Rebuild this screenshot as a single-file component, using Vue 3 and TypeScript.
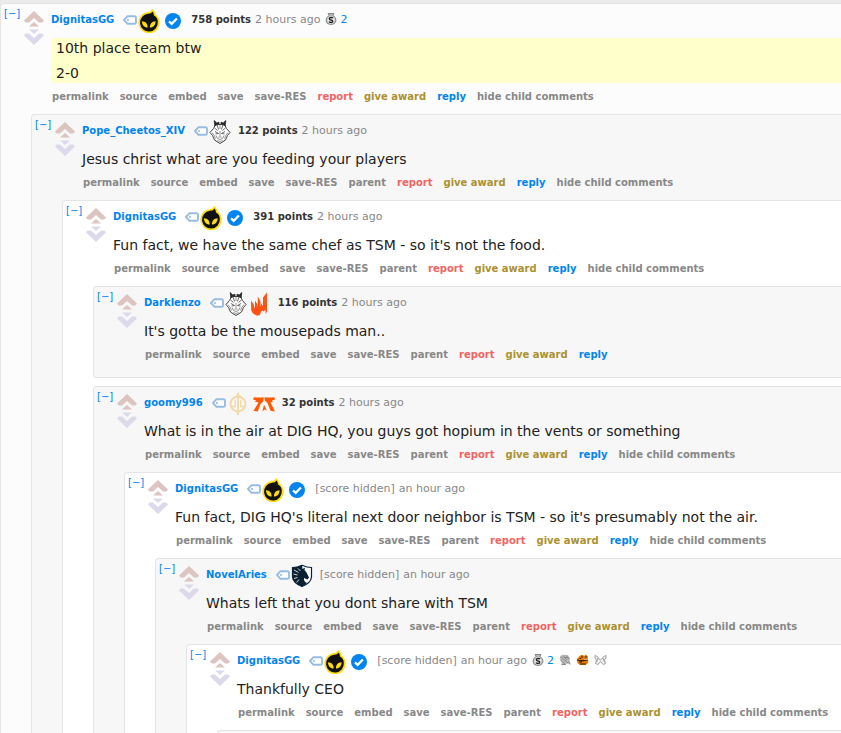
<script setup lang="ts">
import { computed } from 'vue'

defineOptions({ name: 'App' })

type Flair = 'dig' | 'verified' | 'g2' | 'flame' | 'guard' | 'fnatic' | 'liquid'
type Award = 'silver' | 'gem' | 'frog' | 'bow'

interface Comment {
  id: string
  author: string
  flairs: Flair[]
  points?: number
  age: string
  awards?: { kind: Award; count?: number }[]
  body: string[]
  highlighted?: boolean
  empty?: boolean
  replies: Comment[]
}

const props = defineProps<{ comment?: Comment; depth?: number }>()

const thread: Comment = {
  id: 'c1',
  author: 'DignitasGG',
  flairs: ['dig', 'verified'],
  points: 758,
  age: '2 hours ago',
  awards: [{ kind: 'silver', count: 2 }],
  body: ['10th place team btw', '2-0'],
  highlighted: true,
  replies: [
    {
      id: 'c2',
      author: 'Pope_Cheetos_XIV',
      flairs: ['g2'],
      points: 122,
      age: '2 hours ago',
      body: ['Jesus christ what are you feeding your players'],
      replies: [
        {
          id: 'c3',
          author: 'DignitasGG',
          flairs: ['dig', 'verified'],
          points: 391,
          age: '2 hours ago',
          body: ["Fun fact, we have the same chef as TSM - so it's not the food."],
          replies: [
            {
              id: 'c4',
              author: 'Darklenzo',
              flairs: ['g2', 'flame'],
              points: 116,
              age: '2 hours ago',
              body: ["It's gotta be the mousepads man.."],
              replies: [],
            },
            {
              id: 'c5',
              author: 'goomy996',
              flairs: ['guard', 'fnatic'],
              points: 32,
              age: '2 hours ago',
              body: ['What is in the air at DIG HQ, you guys got hopium in the vents or something'],
              replies: [
                {
                  id: 'c6',
                  author: 'DignitasGG',
                  flairs: ['dig', 'verified'],
                  age: 'an hour ago',
                  body: ["Fun fact, DIG HQ's literal next door neighbor is TSM - so it's presumably not the air."],
                  replies: [
                    {
                      id: 'c7',
                      author: 'NovelAries',
                      flairs: ['liquid'],
                      age: 'an hour ago',
                      body: ['Whats left that you dont share with TSM'],
                      replies: [
                        {
                          id: 'c8',
                          author: 'DignitasGG',
                          flairs: ['dig', 'verified'],
                          age: 'an hour ago',
                          awards: [{ kind: 'silver', count: 2 }, { kind: 'gem' }, { kind: 'frog' }, { kind: 'bow' }],
                          body: ['Thankfully CEO'],
                          replies: [
                            { id: 'c9', author: '', flairs: [], age: '', body: [], empty: true, replies: [] },
                          ],
                        },
                      ],
                    },
                  ],
                },
              ],
            },
          ],
        },
      ],
    },
  ],
}

const level = computed(() => props.depth ?? 0)
const node = computed<Comment>(() => props.comment ?? thread)

const actions = computed(() => {
  const list = ['permalink', 'source', 'embed', 'save', 'save-RES']
  if (level.value > 0) list.push('parent')
  list.push('report', 'give award', 'reply')
  if (node.value.replies.length) list.push('hide child comments')
  return list
})

const actionClass = (name: string) => ({
  report: name === 'report',
  award: name === 'give award',
  reply: name === 'reply',
})
</script>

<template>
  <div :class="level === 0 ? 'page' : 'nested'">
    <article class="card" :class="[level === 0 ? 'root' : level % 2 ? 'odd' : 'even', { empty: node.empty }]">
      <div v-if="!node.empty" class="entry">
        <div class="gutter">
          <a class="collapse" :href="'#' + node.id">[−]</a>
          <div class="votes">
            <button type="button" aria-label="upvote">
              <svg width="20" height="16" viewBox="0 0 20 16">
                <path d="M0 9.500 10 0 20 9.500 18.500 11.500H15L10 7 5 11.500H1.500zM5 15.500 10 11 15 15.500z" fill="#dcc4c0" />
              </svg>
            </button>
            <button type="button" aria-label="downvote">
              <svg width="20" height="16" viewBox="0 0 20 16">
                <path d="M0 6.500 10 16 20 6.500 18.500 4.500H15L10 9 5 4.500H1.500zM5 .5 10 5 15 .5z" fill="#dcdaea" />
              </svg>
            </button>
          </div>
        </div>

        <div class="content">
          <header class="tagline">
            <a class="author" :href="'#user-' + node.id">{{ node.author }}</a>
            <button type="button" class="tag" aria-label="tag user">
              <svg width="14" height="10" viewBox="0 0 14 10">
                <path d="M1 5 4.500 1.200H11.500Q13 1.200 13 2.500V7.500Q13 8.800 11.500 8.800H4.500z" fill="#fff" stroke="#98bde2" stroke-width="1.900" stroke-linejoin="round" />
                <circle cx="5" cy="5" r="1.100" fill="#98bde2" />
              </svg>
            </button>
            <template v-for="flair in node.flairs" :key="flair">
              <svg v-if="flair === 'dig'" class="flair" viewBox="0 0 24 24">
                <path d="M11 3C13.500 2.900 14 1.700 15 0 17.200 1.300 18.200 3.300 18.500 5.300 21 7.300 22.700 10 22.700 13A10.700 10.700 0 1 1 11 3z" fill="#ffdc10" />
                <path d="M11 4.800C13.500 4.700 14.500 4 15.400 2.500 16.700 4 16.800 5.200 17 6.500 19.800 8 20.800 10.300 20.800 13A8.900 8.900 0 1 1 11 4.800z" fill="#111" />
                <path d="M5 12.200C8.500 12.200 11 15 10.600 18.600 7 18.200 5 15.800 5 12.200zM18.600 12.200C15 12.200 12.700 15 13 18.600 16.500 18.200 18.600 15.800 18.600 12.200z" fill="#ffdc10" />
              </svg>
              <svg v-else-if="flair === 'verified'" class="flair" viewBox="0 0 24 24">
                <circle cx="12" cy="12" r="8" fill="#0084f0" />
                <path d="m8 12.300 2.700 2.600 5.200-5.400" fill="none" stroke="#fff" stroke-width="2.300" />
              </svg>
              <svg v-else-if="flair === 'g2'" class="flair" viewBox="0 0 24 24">
                <path d="M7 5.500 9 4.500H15L17 5.500 18.500 8.500 22 12.500 19.500 15.500 17.500 20 12 23.500 6.500 20 4.500 15.500 2 12.500 5.500 8.500z" fill="#fff" stroke="#444" stroke-width="1" stroke-linejoin="round" />
                <path d="M6.800 6 6.200 .5 8.800 3 11 2.200V4.200L9 4.500zM17.200 6 17.800 .5 15.200 3 13 2.200V4.200L15 4.500z" fill="#2b2b2b" stroke="#2b2b2b" stroke-width=".8" stroke-linejoin="round" />
                <path d="M9 4.500 10.500 9.500M15 4.500 13.500 9.500M6.500 8 9.500 10.500M17.500 8 14.500 10.500M7 11.500 10.500 13.500 7.500 14M17 11.500 13.500 13.500 16.500 14" fill="none" stroke="#444" stroke-width=".8" />
                <path d="M12 11V16M10.300 17H13.700M8 15.500 9.500 18.500 12 19.500 14.500 18.500 16 15.500M9.500 20.500 12 21.500 14.500 20.500M4 12.500 6.500 16 7.500 18.500M20 12.500 17.500 16 16.500 18.500M12 5V9" fill="none" stroke="#777" stroke-width=".8" />
              </svg>
              <svg v-else-if="flair === 'flame'" class="flair" viewBox="0 0 24 24">
                <path d="M3 8.500 5.800 12.500 6.200 16 7 14.500V8.500L9.200 12 9.800 14.500V4.500L12.500 9.500V15L13.200 11.500 15 14V5.500L19 .5V19.500L17.500 22V17.500L15.800 19.500 14 18.500 12.500 21 12 23 9 23.800 5 21.500 3.200 18.500z" fill="#ff5315" />
              </svg>
              <svg v-else-if="flair === 'guard'" class="flair" viewBox="0 0 24 24">
                <g fill="none" stroke="#f1d9a9" stroke-width="2">
                  <circle cx="12" cy="12" r="7.500" />
                  <path d="M12 1V23" />
                  <path d="M9.300 7.500V14.500H5.500M14.700 7.500V14.500H18.500" stroke-width="1.400" />
                </g>
                <path d="M12 0 14.500 5H9.500zM10 19.500H14L12 24z" fill="#f1d9a9" />
              </svg>
              <svg v-else-if="flair === 'fnatic'" class="flair wide" viewBox="0 0 24 24">
                <path d="M2 5.200Q7 5.800 11.700 5.200L11.300 9.500 8.500 12 5.800 19.500 1.500 18.800 6.500 10.500 2.500 9.500 4.500 8.500 1 7.500zM22.500 5.200Q17 5.800 12.500 5.200L12.800 8.500 15.500 11 18.500 18.800 23 19.500 18.500 10.500 21 9.500 19.800 8.500 23 7.500zM12 12.800 14.800 18.500 12.500 17.500 10.300 19.500z" fill="#ff5a00" />
              </svg>
              <svg v-else class="flair" viewBox="0 0 24 24">
                <path d="M12 1.200Q17 3.500 21.500 3.500V13Q21 19 12 22.500 3 19 2.500 13V3.500Q7 3.500 12 1.200z" fill="#fff" stroke="#0c2033" stroke-width="1.200" />
                <path d="M12 1.200Q7 3.500 2.500 3.500V13Q3 19 12 22.500 15 21 17 19 13.500 17.500 14 14L17.500 15.500 19 13.500 16.500 8.500 14.500 6 15 3.500 12.500 5z" fill="#0c2033" />
                <path d="M4 6 8.500 8.500M3.500 10 7.500 11M4 14.500 7.500 13.500M6.500 18.500 9 15.500M8 4.500 10.500 7" stroke="#fff" stroke-width=".8" />
              </svg>
            </template>
            <span v-if="node.points" class="points">{{ node.points }} points</span>
            <span v-else class="points hidden-score">[score hidden]</span>
            <time>{{ node.age }}</time>
            <a v-for="award in node.awards" :key="award.kind" class="given" :href="'#award-' + award.kind" :aria-label="award.kind">
              <svg v-if="award.kind === 'silver'" width="12" height="12" viewBox="0 0 12 12">
                <path d="M3 .5H9L8 2.500Q11.500 4.500 11 8 10 11.500 6 11.500 1.500 11.500 1 8 .8 4.500 4 2.500z" fill="#b5b5b5" stroke="#777" stroke-width=".8" />
                <circle cx="6" cy="7" r="3.700" fill="#e8e8e8" />
                <path d="M8 5.200Q7.500 4.500 6 4.500 4.300 4.500 4.300 5.700 4.300 6.800 6 7 7.800 7.200 7.800 8.400 7.800 9.500 6 9.500 4.500 9.500 4 8.700" fill="none" stroke="#222" stroke-width="1.300" />
              </svg>
              <svg v-else-if="award.kind === 'gem'" width="12" height="12" viewBox="0 0 12 12">
                <path d="M1 2 4 .8 9 1 11 4 10.500 8 12 11 8.500 9.500 5 11H1.500L3 9 .8 6z" fill="#bbb" />
                <path d="M2 3 9 9M4 1.500 8 6M7 1.500 10 5M2 6.500 6 10M3 10.500H7M5 3.500H9M9.500 7 11 10" stroke="#777" stroke-width=".7" />
              </svg>
              <svg v-else-if="award.kind === 'frog'" width="13" height="12" viewBox="0 0 13 12">
                <path d="M1 5 3 2.500 5 1H7L8 2 10 .5 12 3 11.500 5 7 6 12.500 6.500 12 9 9.500 11H4L1.500 9z" fill="#e07908" />
                <path d="M5 3H7M9 3H11M1 6 6 7 12 6M3 8H6M4 10H10M3.500 4.500H5" stroke="#4a2606" stroke-width="1.100" />
              </svg>
              <svg v-else width="13" height="12" viewBox="0 0 13 12">
                <path d="M1 1.500Q4 2 5 5Q6.500 6.500 8 5 9 2 12 1.500V4L10.500 6 11.500 9.500 9 10.500 6.500 7.500 4 10.500 1.500 9.500 2.500 6 1 4zM4 4 2.500 8M9 4 10.500 8" fill="#eee" stroke="#999" stroke-width=".9" />
              </svg>
              <span v-if="award.count">{{ award.count }}</span>
            </a>
          </header>

          <div class="body" :class="{ highlighted: node.highlighted }">
            <p v-for="line in node.body" :key="line">{{ line }}</p>
          </div>

          <nav class="actions">
            <a v-for="name in actions" :key="name" :href="'#' + node.id" :class="actionClass(name)">{{ name }}</a>
          </nav>
        </div>
      </div>

      <div v-if="node.replies.length" class="replies">
        <App v-for="reply in node.replies" :key="reply.id" :comment="reply" :depth="level + 1" />
      </div>
    </article>
  </div>
</template>

<style>
body {
  background: #ebebeb;
}
</style>

<style scoped>
.page {
  box-sizing: border-box;
  height: 100vh;
  overflow: hidden;
  padding-top: 3px;
  font-family: Verdana, 'DejaVu Sans', sans-serif;
  font-size: 11px;
  color: #888;
}

.card {
  padding: 5px 0 14px;
  border: 1px solid #e4e4e4;
  border-right: 0;
  border-radius: 4px 0 0 4px;
}

.root { background: #fcfcfc; }
.odd { background: #f7f7f7; }
.even { background: #fff; }
.empty { min-height: 60px; }

.entry {
  display: grid;
  grid-template-columns: 50px minmax(0, 1fr);
}

.gutter {
  display: flex;
  align-items: flex-start;
  gap: 3px;
  padding-left: 3px;
}

a { text-decoration: none; color: inherit; }

.collapse {
  width: 17px;
  font-size: 10px;
  line-height: 10px;
  color: #0084f0;
}

.votes {
  display: grid;
  gap: 2px;
  padding-top: 2px;
}

button {
  display: block;
  padding: 0;
  border: 0;
  background: none;
}

svg { display: block; }

.tagline {
  display: flex;
  align-items: flex-start;
  height: 24px;
  margin-bottom: 5px;
  line-height: 22px;
  white-space: nowrap;
}

.author {
  margin-right: 9px;
  font-size: 10px;
  font-weight: bold;
  color: #0084f0;
}

.tag { padding-top: 6px; }

.flair {
  width: 24px;
  height: 24px;
}

.wide { margin-left: 2px; }

.points {
  margin: 0 4px 0 6px;
  font-size: 10px;
  font-weight: bold;
  color: #333;
}

.hidden-score {
  font-size: 11px;
  font-weight: normal;
  color: #888;
}

.given {
  display: flex;
  align-items: center;
  gap: 3px;
  height: 22px;
  margin-left: 5px;
  color: #0084f0;
}

.given svg { margin-bottom: 2px; }

.body {
  display: grid;
  gap: 5px;
  font-size: 14px;
  line-height: 20px;
  color: #222;
}

.body p { margin: 0; }

.highlighted {
  padding-left: 5px;
  background: #ffffcc;
}

.actions {
  display: flex;
  gap: 11px;
  padding: 6px 0 0 1px;
  font-size: 10px;
  font-weight: bold;
  line-height: 16px;
  white-space: nowrap;
}

.report { color: #f06464; }
.award { color: #ab9130; }
.reply { color: #0084f0; }

.replies {
  display: grid;
  gap: 8px;
  margin: 9px 0 0 30px;
}
</style>
